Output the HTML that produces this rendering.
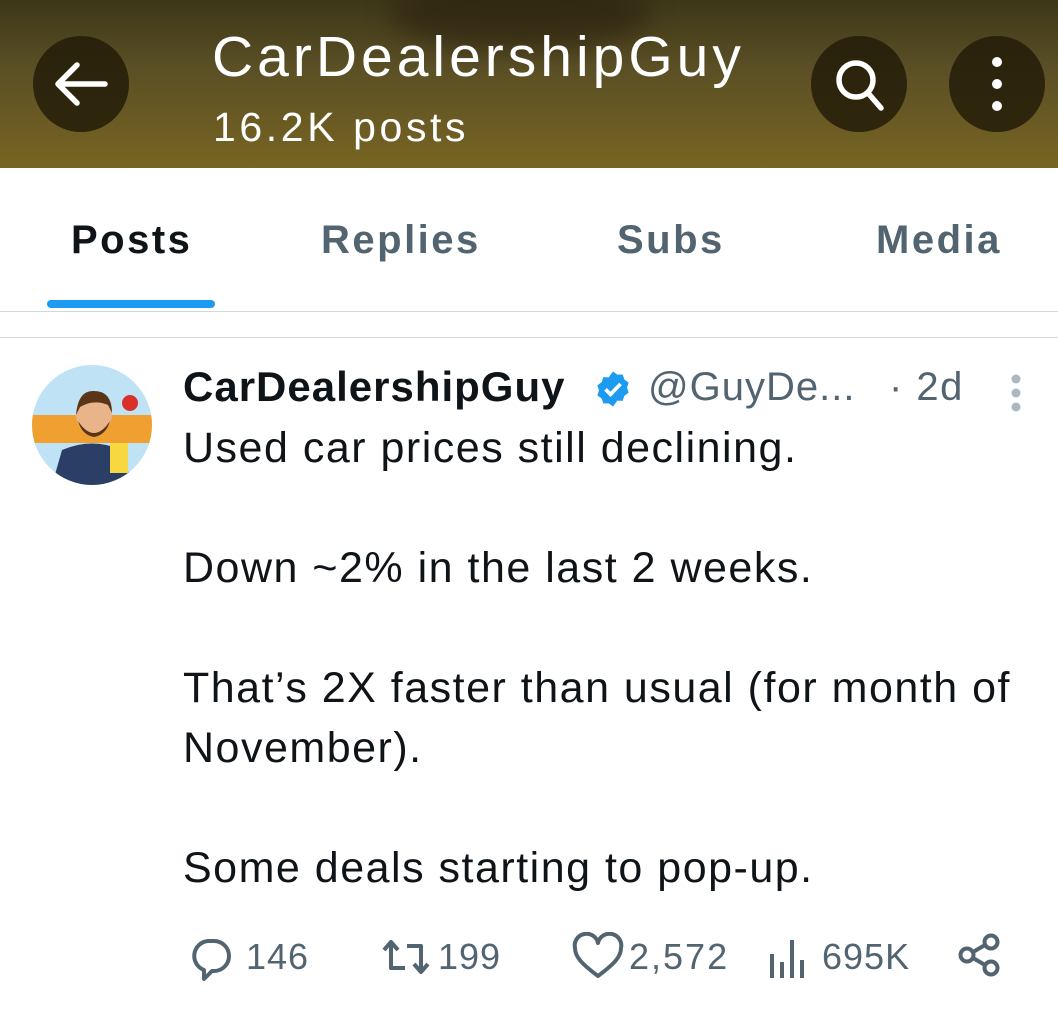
<!DOCTYPE html>
<html><head><style>
body{margin:0;width:1058px;height:1015px;background:#fff;font-family:"Liberation Sans",sans-serif;position:relative;overflow:hidden}
.hdr{position:absolute;left:0;top:0;width:1058px;height:168px;background:linear-gradient(180deg,#3d3618 0%,#5a4f25 40%,#786522 100%)}
.blob{position:absolute;left:390px;top:-20px;width:260px;height:70px;border-radius:50%;background:rgba(40,30,15,.55);filter:blur(12px)}
.circ{position:absolute;top:36px;width:96px;height:96px;border-radius:50%;background:rgba(35,28,8,.85)}
.t{position:absolute;white-space:nowrap}
.tab{position:absolute;top:218px;font-size:40px;font-weight:bold;color:#536471;letter-spacing:2.5px}
.body{position:absolute;left:183px;font-size:43px;letter-spacing:1.5px;color:#0f1419;white-space:nowrap}
.act{position:absolute;top:936px;font-size:36px;color:#536471;letter-spacing:1px}
</style></head><body>
<div class="hdr"><div class="blob"></div>
<div class="circ" style="left:33px"></div>
<svg class="t" style="left:33px;top:36px" width="96" height="96" viewBox="0 0 96 96"><path d="M72 48H26M44 29L25 48l19 19" stroke="#fff" stroke-width="5.5" fill="none" stroke-linecap="round" stroke-linejoin="round"/></svg>
<div class="circ" style="left:811px"></div>
<svg class="t" style="left:811px;top:36px" width="96" height="96" viewBox="0 0 96 96"><circle cx="45" cy="44" r="17" stroke="#fff" stroke-width="5.5" fill="none"/><path d="M57 57l13 15" stroke="#fff" stroke-width="5.5" stroke-linecap="round"/></svg>
<div class="circ" style="left:949px"></div>
<svg class="t" style="left:949px;top:36px" width="96" height="96" viewBox="0 0 96 96"><circle cx="48" cy="26" r="5" fill="#fff"/><circle cx="48" cy="48" r="5" fill="#fff"/><circle cx="48" cy="70" r="5" fill="#fff"/></svg>
<div class="t" style="left:212px;top:24px;font-size:57px;letter-spacing:4px;color:#fff">CarDealershipGuy</div>
<div class="t" style="left:213px;top:104px;font-size:41px;letter-spacing:3.6px;color:#fff">16.2K posts</div>
</div>
<div class="tab" style="left:71px;color:#0f1419">Posts</div>
<div class="tab" style="left:321px">Replies</div>
<div class="tab" style="left:617px">Subs</div>
<div class="tab" style="left:876px">Media</div>
<div style="position:absolute;left:47px;top:300px;width:168px;height:8px;border-radius:4px;background:#1d9bf0"></div>
<div style="position:absolute;left:0;top:311px;width:1058px;height:1px;background:#cfd9de"></div>
<div style="position:absolute;left:0;top:337px;width:1058px;height:1px;background:#cfd9de"></div>
<svg class="t" style="left:32px;top:365px" width="120" height="120" viewBox="0 0 120 120"><defs><clipPath id="c"><circle cx="60" cy="60" r="60"/></clipPath></defs><g clip-path="url(#c)"><rect width="120" height="120" fill="#bfe3f5"/><rect x="0" y="50" width="120" height="28" fill="#f0a030"/><path d="M20 120 L30 85 Q60 72 90 85 L100 120Z" fill="#2b3f66"/><circle cx="62" cy="50" r="18" fill="#e9b48a"/><path d="M44 50 Q46 25 62 26 Q80 26 80 48 L76 40 Q62 34 48 42Z" fill="#5a3518"/><path d="M46 56 Q62 80 78 56 Q74 70 62 72 Q50 70 46 56Z" fill="#5a3518"/><rect x="78" y="78" width="18" height="30" fill="#f7d840"/><circle cx="98" cy="38" r="8" fill="#d9302a"/></g></svg>
<div class="t" style="left:183px;top:363px;font-size:42px;letter-spacing:1px;font-weight:bold;color:#0f1419">CarDealershipGuy</div>
<svg class="t" style="left:593px;top:369px" width="40" height="40" viewBox="0 0 24 24"><path d="M12 1.5l2.6 1.9 3.2-.1 1 3 2.6 1.9-1 3 1 3-2.6 1.9-1 3-3.2-.1L12 22.5l-2.6-1.9-3.2.1-1-3-2.6-1.9 1-3-1-3 2.6-1.9 1-3 3.2.1z" fill="#1d9bf0"/><path d="M7.5 12.2l3 3 6-6.2" stroke="#fff" stroke-width="2.2" fill="none"/></svg>
<div class="t" style="left:648px;top:365px;font-size:40px;letter-spacing:1px;color:#536471">@GuyDe...</div>
<div class="t" style="left:889px;top:365px;font-size:40px;letter-spacing:1.5px;color:#536471">· 2d</div>
<svg class="t" style="left:1006px;top:372px" width="20" height="42"><circle cx="10" cy="7" r="4.5" fill="#aab8c2"/><circle cx="10" cy="21" r="4.5" fill="#aab8c2"/><circle cx="10" cy="35" r="4.5" fill="#aab8c2"/></svg>
<div class="body" style="top:424px">Used car prices still declining.</div>
<div class="body" style="top:544px">Down ~2% in the last 2 weeks.</div>
<div class="body" style="top:664px">That’s 2X faster than usual (for month of</div>
<div class="body" style="top:724px">November).</div>
<div class="body" style="top:844px">Some deals starting to pop-up.</div>
<svg class="t" style="left:186px;top:932px" width="50" height="50" viewBox="0 0 50 50"><path d="M22 9h6a15 15 0 0 1 0 30h-2l-8 8v-9A15 15 0 0 1 22 9z" stroke="#536471" stroke-width="4" fill="none" stroke-linejoin="round"/></svg>
<div class="act" style="left:246px">146</div>
<svg class="t" style="left:374px;top:932px" width="64" height="50" viewBox="0 0 64 50"><path d="M10 18l7-8 7 8M17 11v25h14M33 14h14v25M40 32l7 8 7-8" stroke="#536471" stroke-width="4" fill="none" stroke-linejoin="round"/></svg>
<div class="act" style="left:438px">199</div>
<svg class="t" style="left:570px;top:932px" width="56" height="50" viewBox="0 0 56 50"><path d="M28 44C12 32 5 25 5 16a10 10 0 0 1 23-5 10 10 0 0 1 23 5c0 9-7 16-23 28z" stroke="#536471" stroke-width="4" fill="none" stroke-linejoin="round"/></svg>
<div class="act" style="left:629px;letter-spacing:2px">2,572</div>
<svg class="t" style="left:766px;top:932px" width="50" height="50" viewBox="0 0 50 50"><path d="M6 22v24M16 30v16M26 8v38M36 28v18" stroke="#536471" stroke-width="4"/></svg>
<div class="act" style="left:822px">695K</div>
<svg class="t" style="left:955px;top:930px" width="50" height="50" viewBox="0 0 50 50"><circle cx="36" cy="12" r="6.5" stroke="#536471" stroke-width="4" fill="none"/><circle cx="12" cy="25" r="6.5" stroke="#536471" stroke-width="4" fill="none"/><circle cx="36" cy="38" r="6.5" stroke="#536471" stroke-width="4" fill="none"/><path d="M18 22l12-7M18 28l12 7" stroke="#536471" stroke-width="4"/></svg>
</body></html>
